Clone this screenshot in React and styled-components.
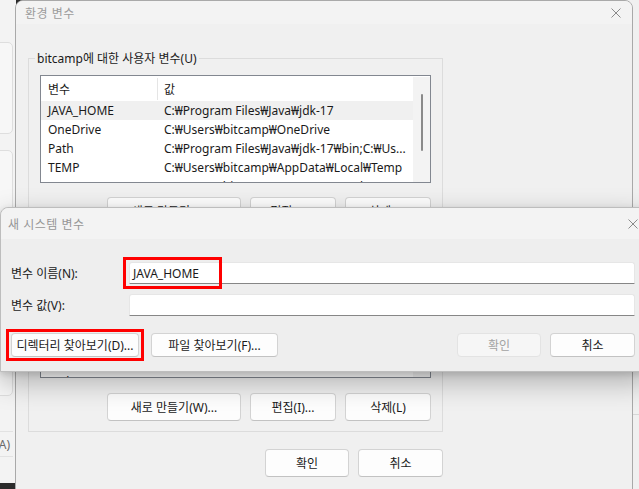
import styled, { createGlobalStyle } from "styled-components";

const GlobalStyle = createGlobalStyle`
  html, body { margin: 0; padding: 0; }
  body {
    font-family: "Noto Sans", "Noto Sans CJK KR", sans-serif;
    font-size: 12px;
    color: #1a1a1a;
    background: #efefef;
  }
  * { box-sizing: border-box; }
`;

const Desktop = styled.div`
  position: relative;
  width: 639px;
  height: 489px;
  overflow: hidden;
  background: #2b2b2b;
`;

/* windows on the desktop */
const BgWindow = styled.div`
  position: absolute;
  left: -300px;
  top: 0;
  width: 316px;
  height: 483px;
  background: #f3f3f3;
  display: flex;
  flex-direction: column;
  padding: 42px 3px 0 0;
`;

const BgPanel = styled.div`
  height: ${(p) => p.$h}px;
  margin-top: ${(p) => p.$mt || 0}px;
  border: 1px solid #dedede;
  border-radius: 5px;
  background: #f7f7f7;
`;

const BgFooter = styled.div`
  margin-top: 35px;
  height: 26px;
  border-top: 1px solid #e2e2e2;
  border-bottom: 1px solid #e2e2e2;
  display: flex;
  align-items: center;
  justify-content: flex-end;
  padding-right: 3px;
  color: #6a6a6a;
`;

const RightWindow = styled.div`
  position: absolute;
  left: 600px;
  top: 0;
  width: 60px;
  height: 489px;
  background: #f0f0f0;
  display: flex;
  flex-direction: column;
`;

const RightHeader = styled.div`
  height: 415px;
  border-bottom: 1px solid #d6d6d6;
`;

const EnvWindow = styled.div`
  position: absolute;
  left: 15px;
  top: 0;
  width: 618px;
  height: 500px;
  background: #f0f0f0;
  border: 1px solid #a9a9a9;
  border-radius: 8px 8px 0 0;
  overflow: hidden;
  display: flex;
  flex-direction: column;
`;

const TitleBar = styled.div`
  height: ${(p) => p.$h}px;
  flex: none;
  display: flex;
  align-items: center;
  justify-content: space-between;
  padding-left: ${(p) => p.$pl}px;
  background: #f3f3f3;
  color: #9c9c9c;
  font-size: 12px;
  letter-spacing: 0.5px;
`;

const CloseBox = styled.div`
  width: 32px;
  height: 100%;
  display: flex;
  align-items: center;
  justify-content: center;
`;

const EnvBody = styled.div`
  padding: 34px 0 0 12px;
  display: flex;
  flex-direction: column;
`;

const GroupBox = styled.div`
  width: 415px;
  margin-top: ${(p) => p.$mt || 0}px;
  border: 1px solid #dcdcdc;
  padding: 0 11px 10px 11px;
  display: flex;
  flex-direction: column;
`;

const Legend = styled.span`
  align-self: flex-start;
  height: 16px;
  line-height: 16px;
  margin: -8px 0 0 -5px;
  padding: 0 2px;
  background: #f0f0f0;
  white-space: nowrap;
`;

const ListBox = styled.div`
  margin-top: 8px;
  height: 108px;
  display: flex;
  border: 1px solid #828790;
  background: #fff;
  overflow: hidden;
`;

const ListBody = styled.div`
  flex: 1;
  min-width: 0;
`;

const ListHeader = styled.div`
  display: grid;
  grid-template-columns: 117px 1fr;
  height: 25px;
  align-items: center;
`;

const HeaderCell = styled.div`
  height: 22px;
  display: flex;
  align-items: center;
  padding-left: ${(p) => (p.$first ? 7 : 6)}px;
  border-right: ${(p) => (p.$first ? "1px solid #e5e5e5" : "none")};
`;

const ListRow = styled.div`
  display: grid;
  grid-template-columns: 117px 1fr;
  height: 19px;
  align-items: center;
  background: ${(p) => (p.$selected ? "#f0f0f0" : "transparent")};
`;

const Cell = styled.div`
  padding-left: ${(p) => (p.$first ? 7 : 6)}px;
  white-space: nowrap;
  overflow: hidden;
`;

const ScrollTrack = styled.div`
  width: 17px;
  flex: none;
  margin-top: 1px;
  background: #f3f3f3;
  display: flex;
  justify-content: center;
  padding-top: 17px;
`;

const ScrollThumb = styled.div`
  width: 2px;
  height: 57px;
  border-radius: 1px;
  background: #8a8a8a;
`;

const ButtonRow = styled.div`
  display: flex;
  justify-content: flex-end;
  gap: ${(p) => p.$gap || 9}px;
  margin-top: ${(p) => p.$mt || 0}px;
`;

const Button = styled.button`
  width: ${(p) => p.$w}px;
  height: ${(p) => p.$h || 28}px;
  padding: 0;
  font-family: inherit;
  font-size: 12px;
  color: #1a1a1a;
  background: #fdfdfd;
  border: 1px solid #d3d3d3;
  border-bottom-color: #c2c2c2;
  border-radius: 4px;
  white-space: nowrap;

  &:disabled {
    background: #f6f6f6;
    border-color: #e3e3e3;
    color: #a3a3a3;
  }
`;

const FooterRow = styled.div`
  width: 415px;
  display: flex;
  justify-content: flex-end;
  gap: 9px;
  margin-top: 17px;
`;

/* front dialog */
const Dialog = styled.div`
  position: absolute;
  left: 0;
  top: 207px;
  width: 650px;
  background: #eeeeee;
  border: 1px solid #bdbdbd;
  border-radius: 8px 8px 0 0;
  box-shadow: 0 10px 28px rgba(0, 0, 0, 0.28), 0 2px 6px rgba(0, 0, 0, 0.12);
  display: flex;
  flex-direction: column;
`;

const DialogTitle = styled(TitleBar)`
  border-radius: 8px 8px 0 0;
  color: #969696;
`;

const DialogBody = styled.div`
  padding: 23px 14px 14px 10px;
  display: flex;
  flex-direction: column;
`;

const FormGrid = styled.div`
  display: grid;
  grid-template-columns: 118px 1fr;
  row-gap: 10px;
  align-items: center;
`;

const Label = styled.label`
  white-space: nowrap;
`;

const Marked = styled.div`
  position: relative;
  display: flex;
`;

const Input = styled.div`
  flex: 1;
  height: 22px;
  background: #ffffff;
  border: 1px solid #e6e6e6;
  border-bottom: 1px solid #868686;
  border-radius: 3px 3px 0 0;
  padding-left: 3px;
  display: flex;
  align-items: center;
`;

/* red annotation boxes drawn over the screenshot */
const Highlight = styled.span`
  position: absolute;
  border: 3px solid #ff0000;
  pointer-events: none;
`;

const InputHighlight = styled(Highlight)`
  left: -6px;
  top: -5px;
  width: 99px;
  height: 32px;
`;

const ButtonHighlight = styled(Highlight)`
  inset: -4px -5px;
`;

const DialogActions = styled.div`
  display: flex;
  justify-content: space-between;
  align-items: center;
  margin-top: 17px;
`;

const CloseIcon = ({ color }) => (
  <svg width="10" height="10" viewBox="0 0 10 10">
    <path d="M0.5 0.5L9.5 9.5M9.5 0.5L0.5 9.5" stroke={color} strokeWidth="1" fill="none" />
  </svg>
);

const userVars = [
  ["JAVA_HOME", "C:₩Program Files₩Java₩jdk-17"],
  ["OneDrive", "C:₩Users₩bitcamp₩OneDrive"],
  ["Path", "C:₩Program Files₩Java₩jdk-17₩bin;C:₩Us..."],
  ["TEMP", "C:₩Users₩bitcamp₩AppData₩Local₩Temp"],
  ["TMP", "C:₩Users₩bitcamp₩AppData₩Local₩Temp"],
];

const systemVars = [
  ["ComSpec", "C:₩WINDOWS₩system32₩cmd.exe"],
  ["DriverData", "C:₩Windows₩System32₩Drivers₩DriverData"],
  ["NUMBER_OF_PROCESSORS", "8"],
  ["OS", "Windows_NT"],
  ["Path", "C:₩WINDOWS₩system32;C:₩WINDOWS;..."],
  ["PATHEXT", ".COM;.EXE;.BAT;.CMD;.VBS;.VBE;.JS"],
];

const VarList = ({ rows, selected }) => (
  <ListBox>
    <ListBody>
      <ListHeader>
        <HeaderCell $first>변수</HeaderCell>
        <HeaderCell>값</HeaderCell>
      </ListHeader>
      {rows.map(([name, value], i) => (
        <ListRow key={name + i} $selected={i === selected}>
          <Cell $first>{name}</Cell>
          <Cell>{value}</Cell>
        </ListRow>
      ))}
    </ListBody>
    <ScrollTrack>
      <ScrollThumb />
    </ScrollTrack>
  </ListBox>
);

export default function App() {
  return (
    <>
      <GlobalStyle />
      <Desktop>
        <BgWindow>
          <BgPanel $h={92} />
          <BgPanel $h={246} $mt={16} />
          <BgFooter>적용(A)</BgFooter>
        </BgWindow>

        <RightWindow>
          <RightHeader />
        </RightWindow>

        <EnvWindow>
          <TitleBar $h={23} $pl={9}>
            <span>환경 변수</span>
            <CloseBox>
              <CloseIcon color="#8a8a8a" />
            </CloseBox>
          </TitleBar>
          <EnvBody>
            <GroupBox>
              <Legend>bitcamp에 대한 사용자 변수(U)</Legend>
              <VarList rows={userVars} selected={0} />
              <ButtonRow $mt={14}>
                <Button $w={134}>새로 만들기(N)...</Button>
                <Button $w={86}>편집(E)...</Button>
                <Button $w={86}>삭제(D)</Button>
              </ButtonRow>
            </GroupBox>
            <GroupBox $mt={17}>
              <Legend>시스템 변수(S)</Legend>
              <VarList rows={systemVars} />
              <ButtonRow $mt={15}>
                <Button $w={134}>새로 만들기(W)...</Button>
                <Button $w={86}>편집(I)...</Button>
                <Button $w={86}>삭제(L)</Button>
              </ButtonRow>
            </GroupBox>
            <FooterRow>
              <Button $w={84}>확인</Button>
              <Button $w={85}>취소</Button>
            </FooterRow>
          </EnvBody>
        </EnvWindow>

        <Dialog>
          <DialogTitle $h={31} $pl={7}>
            <span>새 시스템 변수</span>
            <CloseBox>
              <CloseIcon color="#8a8a8a" />
            </CloseBox>
          </DialogTitle>
          <DialogBody>
            <FormGrid>
              <Label>변수 이름(N):</Label>
              <Marked>
                <Input>JAVA_HOME</Input>
                <InputHighlight />
              </Marked>
              <Label>변수 값(V):</Label>
              <Marked>
                <Input />
              </Marked>
            </FormGrid>
            <DialogActions>
              <ButtonRow $gap={12}>
                <Marked>
                  <Button $w={128} $h={24}>
                    디렉터리 찾아보기(D)...
                  </Button>
                  <ButtonHighlight />
                </Marked>
                <Button $w={127} $h={24}>
                  파일 찾아보기(F)...
                </Button>
              </ButtonRow>
              <ButtonRow>
                <Button $w={84} $h={24} disabled>
                  확인
                </Button>
                <Button $w={85} $h={24}>
                  취소
                </Button>
              </ButtonRow>
            </DialogActions>
          </DialogBody>
        </Dialog>
      </Desktop>
    </>
  );
}
